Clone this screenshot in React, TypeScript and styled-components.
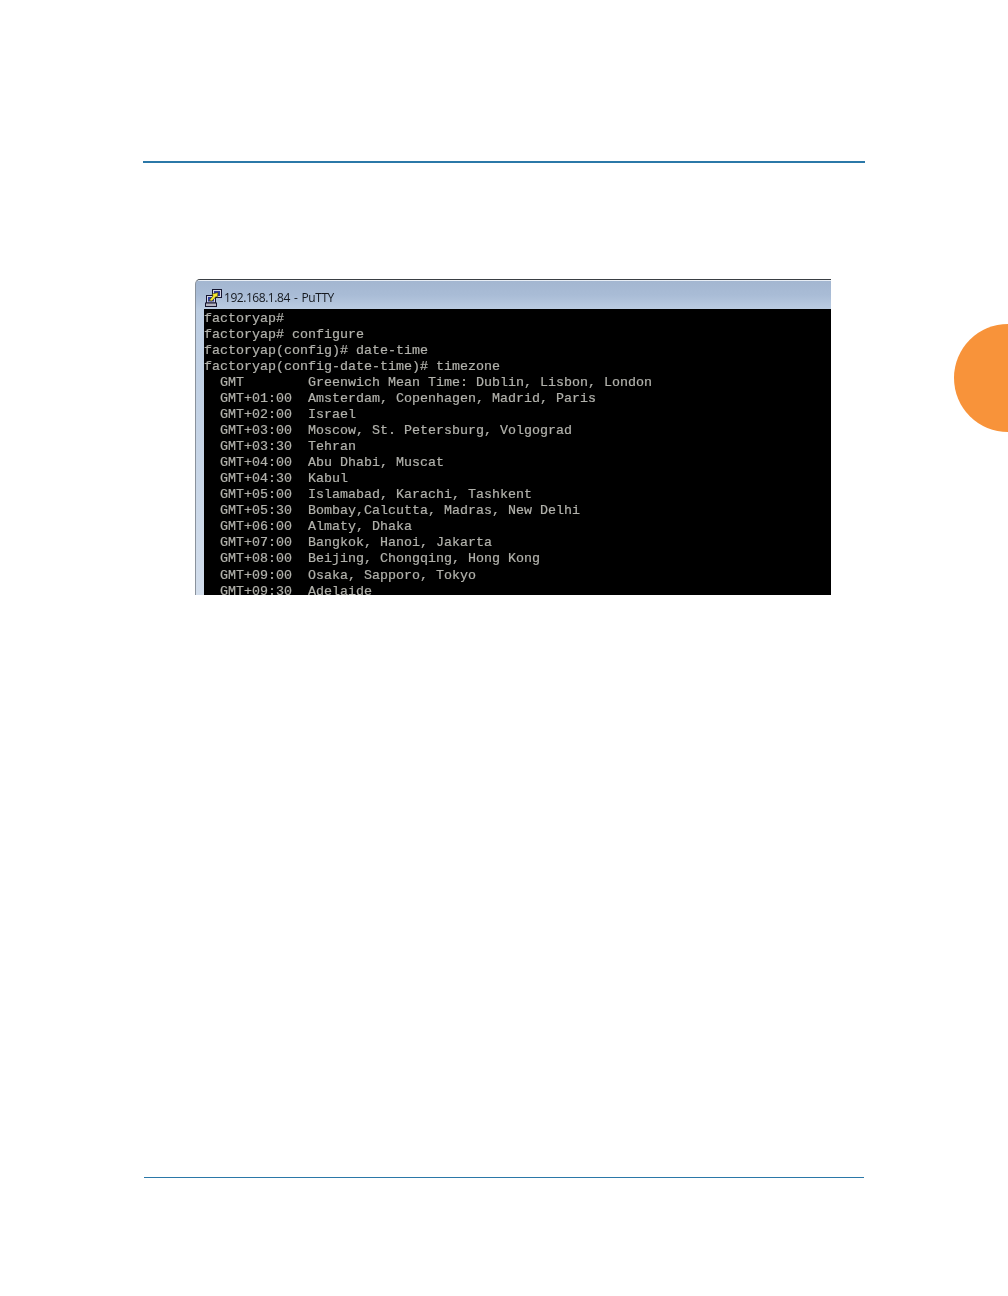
import { createGlobalStyle, styled } from "styled-components";

const GlobalStyle = createGlobalStyle`
    html, body {
        margin: 0;
        padding: 0;
        background: #fff;
    }
`;

const Page = styled.div`
    position: relative;
    width: 1008px;
    height: 1296px;
    overflow: hidden;
    background: #fff;
    display: flex;
    flex-direction: column;
    padding-top: 161px;
    box-sizing: border-box;
`;

const Rule = styled.div<{ $thick?: boolean }>`
    height: ${(p) => (p.$thick ? "2px" : "1px")};
    margin-left: ${(p) => (p.$thick ? "143px" : "144px")};
    width: ${(p) => (p.$thick ? "722px" : "720px")};
    background: #2b78a8;
    flex: none;
`;

const PuttyWindow = styled.div`
    margin: 116px 0 0 195px;
    width: 636px;
    height: 316px;
    flex: none;
    box-sizing: border-box;
    border-top: 1px solid #3a3f44;
    border-left: 1px solid #8a929c;
    border-top-left-radius: 5px;
    background: linear-gradient(to bottom, #a3b6d0 0, #a9bcd6 15px, #bccde2 30px, #d3deec 100%);
    display: flex;
    flex-direction: column;
    overflow: hidden;
`;

const TitleBar = styled.div`
    height: 29px;
    flex: none;
    display: flex;
    align-items: center;
    gap: 1px;
    padding: 6px 0 0 8px;
    box-sizing: border-box;
    box-shadow: inset 0 1px 0 #e8eef5;
`;

const TitleText = styled.span`
    font-family: "Open Sans", "Liberation Sans", sans-serif;
    font-size: 12px;
    letter-spacing: -0.45px;
    word-spacing: 1.5px;
    color: #15191f;
    white-space: pre;
    filter: blur(0.25px);
`;

const Terminal = styled.pre`
    flex: 1;
    margin: 0 0 0 8px;
    padding: 2px 0 0 0;
    background: #000;
    color: #b2b2ac;
    font-family: "Liberation Mono", "Courier New", monospace;
    font-size: 13.33px;
    line-height: 16.03px;
    overflow: hidden;
    -webkit-text-stroke: 0.2px #b2b2ac;
    filter: blur(0.4px);
`;

const BottomRule = styled(Rule)`
    margin-top: 582px;
`;

const ChapterTab = styled.div`
    position: absolute;
    left: 954px;
    top: 324px;
    width: 108px;
    height: 108px;
    border-radius: 50%;
    background: #f8933a;
`;

const PuttyIcon = () => (
    <svg width="19" height="18" viewBox="0 0 19 18">
        <rect x="8.5" y="0.5" width="9" height="8" fill="#d4d4e4" stroke="#14142e" />
        <rect x="10" y="2" width="6" height="5" fill="#2f3c9c" />
        <rect x="2.5" y="6.5" width="9" height="7.5" fill="#d4d4e4" stroke="#14142e" />
        <rect x="4" y="8" width="6" height="4.5" fill="#2f3c9c" />
        <rect x="1.5" y="14" width="11" height="3.5" fill="#b4b4c0" stroke="#14142e" />
        <path d="M5 11.5 L9 7 L8 5 L14 3.5 L13.5 8.5 L12 7.5 L8 12 Z" fill="#f6e62e" stroke="#2c2c08" strokeWidth="0.6" />
    </svg>
);

const lines = `factoryap#
factoryap# configure
factoryap(config)# date-time
factoryap(config-date-time)# timezone
  GMT        Greenwich Mean Time: Dublin, Lisbon, London
  GMT+01:00  Amsterdam, Copenhagen, Madrid, Paris
  GMT+02:00  Israel
  GMT+03:00  Moscow, St. Petersburg, Volgograd
  GMT+03:30  Tehran
  GMT+04:00  Abu Dhabi, Muscat
  GMT+04:30  Kabul
  GMT+05:00  Islamabad, Karachi, Tashkent
  GMT+05:30  Bombay,Calcutta, Madras, New Delhi
  GMT+06:00  Almaty, Dhaka
  GMT+07:00  Bangkok, Hanoi, Jakarta
  GMT+08:00  Beijing, Chongqing, Hong Kong
  GMT+09:00  Osaka, Sapporo, Tokyo
  GMT+09:30  Adelaide`;

export default function App() {
    return <Page>
        <GlobalStyle />
        <Rule $thick />
        <PuttyWindow>
            <TitleBar>
                <PuttyIcon />
                <TitleText>192.168.1.84 - PuTTY</TitleText>
            </TitleBar>
            <Terminal>{lines}</Terminal>
        </PuttyWindow>
        <BottomRule />
        <ChapterTab />
    </Page>;
}
